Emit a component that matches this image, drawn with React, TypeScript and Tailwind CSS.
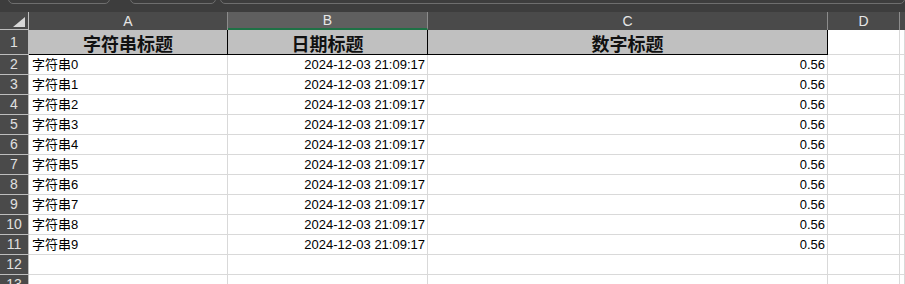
const rows = Array.from({ length: 10 }, (_, i) => i);

const hdr = 'h-[18px] flex items-center justify-center text-[14px] text-[#e6e6e6] bg-[#4a4a4a] border-r border-[#8c8c8c]';
const rowNum = 'flex items-center justify-center text-[14px] text-[#e0e0e0] bg-[#4a4a4a] border-r border-b border-[#bdbdbd]';
const cell = 'flex items-center text-[13px] text-black border-r border-b border-[#d9d9d9] overflow-hidden whitespace-nowrap';
const head = 'h-[25px] flex items-center justify-center pt-[2px] bg-[#c0c0c0] border-r border-b border-black text-[18px] font-bold text-[#111] font-["Noto_Sans_CJK_SC",sans-serif]';

export default function App() {
  return (
    <div className="w-[905px] h-[284px] overflow-hidden bg-white font-['Liberation_Sans','Noto_Sans_CJK_SC',sans-serif]">
      {/* bottom edge of the formula bar boxes */}
      <div className="h-[12px] bg-[#3d3d3d] flex items-start overflow-hidden">
        <div className="ml-[8px] w-[102px] h-[12px] -mt-[8px] rounded-[5px] border border-[#6e6e6e]" />
        <div className="ml-[20px] w-[86px] h-[12px] -mt-[8px] rounded-[5px] border border-[#6e6e6e]" />
        <div className="ml-[4px] flex-1 h-[12px] -mt-[8px] rounded-[5px] border border-[#6e6e6e]" />
      </div>

      <div className="grid grid-cols-[29px_199px_200px_400px_72px_1fr]">
        {/* column headers */}
        <div className="h-[18px] bg-[#4a4a4a] border-r border-b border-[#bdbdbd] flex items-end justify-end pr-[3px] pb-[2px]">
          <svg width="12" height="10" viewBox="0 0 12 10">
            <polygon points="0,10 12,10 12,0" fill="#d8d8d8" />
          </svg>
        </div>
        <div className={hdr}>A</div>
        <div className={`${hdr} bg-[#5f5f5f] border-b-2 border-b-[#1e7145]`}>B</div>
        <div className={hdr}>C</div>
        <div className={hdr}>D</div>
        <div className={`${hdr} border-r-0`} />

        {/* row 1 : titles */}
        <div className={`${rowNum} h-[25px]`}>1</div>
        <div className={head}>字符串标题</div>
        <div className={head}>日期标题</div>
        <div className={head}>数字标题</div>
        <div className={`${cell} h-[25px]`} />
        <div className={`${cell} h-[25px]`} />

        {rows.map((i) => (
          <div key={i} className="contents">
            <div className={`${rowNum} h-[20px]`}>{i + 2}</div>
            <div className={`${cell} h-[20px] pl-[3px]`}>字符串{i}</div>
            <div className={`${cell} h-[20px] justify-end pr-[2px]`}>2024-12-03 21:09:17</div>
            <div className={`${cell} h-[20px] justify-end pr-[2px]`}>0.56</div>
            <div className={`${cell} h-[20px]`} />
            <div className={`${cell} h-[20px]`} />
          </div>
        ))}

        {[12, 13].map((n) => (
          <div key={n} className="contents">
            <div className={`${rowNum} h-[20px]`}>{n}</div>
            <div className={`${cell} h-[20px]`} />
            <div className={`${cell} h-[20px]`} />
            <div className={`${cell} h-[20px]`} />
            <div className={`${cell} h-[20px]`} />
            <div className={`${cell} h-[20px]`} />
          </div>
        ))}
      </div>
    </div>
  );
}
